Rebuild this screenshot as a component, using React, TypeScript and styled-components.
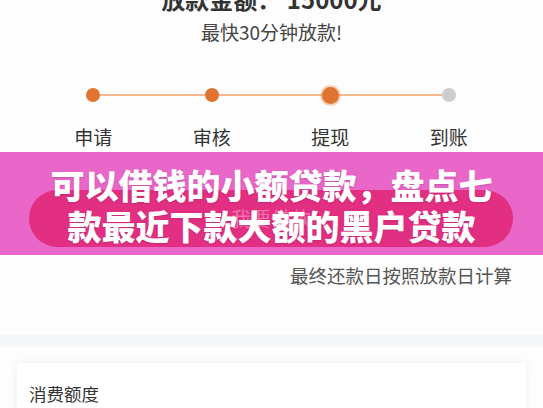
import React from "react";
import styled, { createGlobalStyle } from "styled-components";

const Global = createGlobalStyle`
  html, body { margin: 0; padding: 0; background: #fdfdfd; }
  body { width: 543px; height: 408px; overflow: hidden; font-family: "Noto Sans CJK SC", "Noto Sans", sans-serif; }
`;

const Page = styled.div`
  width: 543px;
  height: 408px;
  overflow: hidden;
  display: flex;
  flex-direction: column;
  background: #fdfdfd;
  & > * {
    flex-shrink: 0;
  }
`;

const Amount = styled.div`
  margin-top: -17px;
  text-align: center;
  font-size: 24px;
  line-height: 32px;
  font-weight: 700;
  color: #333;
`;

const Sub = styled.div`
  margin-top: 4px;
  text-align: center;
  font-size: 19px;
  line-height: 26px;
  color: #444;
`;

const Steps = styled.div`
  margin-top: 38px;
  padding-left: 34px;
  display: grid;
  grid-template-columns: repeat(4, 118.5px);
`;

const Step = styled.div<{ $last?: boolean }>`
  position: relative;
  display: flex;
  flex-direction: column;
  align-items: center;
  &::before {
    content: "";
    display: ${(p) => (p.$last ? "none" : "block")};
    position: absolute;
    top: 11px;
    left: 50%;
    width: 100%;
    height: 2px;
    background: #f2b98f;
  }
`;

const DotBox = styled.div`
  height: 24px;
  display: flex;
  align-items: center;
  justify-content: center;
  position: relative;
  z-index: 1;
`;

const Dot = styled.div<{ $state: "done" | "active" | "todo" }>`
  width: ${(p) => (p.$state === "active" ? 17 : 14)}px;
  height: ${(p) => (p.$state === "active" ? 17 : 14)}px;
  border-radius: 50%;
  background: ${(p) => (p.$state === "todo" ? "#cdcdcd" : "#e07330")};
  box-shadow: ${(p) => (p.$state === "active" ? "0 0 0 2px rgba(240, 160, 110, 0.45)" : "none")};
`;

const StepLabel = styled.div`
  margin-top: 17px;
  font-size: 19px;
  line-height: 26px;
  color: #333;
`;

const Banner = styled.div`
  position: relative;
  margin-top: 2px;
  height: 103px;
  background: #e867c9;
  display: flex;
  flex-direction: column;
  padding: 38px 30px 8px 29px;
  box-sizing: border-box;
`;

const Pill = styled.div`
  height: 57px;
  border-radius: 29px;
  background: #e22f82;
  display: flex;
  align-items: center;
  justify-content: center;
  font-size: 20px;
  color: rgba(255, 170, 210, 0.55);
`;

const Title = styled.div`
  position: absolute;
  left: 0;
  right: 0;
  top: 12px;
  text-align: center;
  font-size: 34px;
  line-height: 41px;
  font-weight: 900;
  color: #fff;
  text-shadow: 0 1px 2px rgba(120, 20, 80, 0.25);
`;

const Note = styled.div`
  margin-top: 7px;
  padding-right: 31px;
  text-align: right;
  font-size: 18.5px;
  line-height: 26px;
  color: #555;
`;

const Divider = styled.div`
  margin-top: 47px;
  height: 11px;
  background: #f5f6f8;
`;

const Card = styled.div`
  margin: 17px 17px 0;
  background: #fff;
  border-radius: 4px;
  box-shadow: 0 0 8px rgba(0, 0, 0, 0.07);
  padding: 19px 12px 20px;
  height: 80px;
`;

const CardTitle = styled.div`
  font-size: 17.5px;
  line-height: 24px;
  color: #333;
`;

const steps: { label: string; state: "done" | "active" | "todo" }[] = [
  { label: "申请", state: "done" },
  { label: "审核", state: "done" },
  { label: "提现", state: "active" },
  { label: "到账", state: "todo" },
];

export default function App() {
  return (
    <Page>
      <Global />
      <Amount>放款金额： 15000元</Amount>
      <Sub>最快30分钟放款!</Sub>
      <Steps>
        {steps.map((s, i) => (
          <Step key={s.label} $last={i === steps.length - 1}>
            <DotBox>
              <Dot $state={s.state} />
            </DotBox>
            <StepLabel>{s.label}</StepLabel>
          </Step>
        ))}
      </Steps>
      <Banner>
        <Pill>我要借款</Pill>
        <Title>
          可以借钱的小额贷款，盘点七
          <br />
          款最近下款大额的黑户贷款
        </Title>
      </Banner>
      <Note>最终还款日按照放款日计算</Note>
      <Divider />
      <Card>
        <CardTitle>消费额度</CardTitle>
      </Card>
    </Page>
  );
}
